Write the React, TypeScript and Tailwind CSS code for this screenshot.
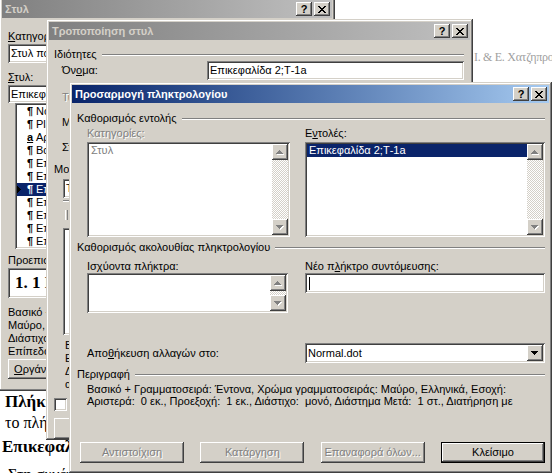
import React from 'react';
import clsx from 'clsx';

const face = 'bg-[#d4d0c8]';
const frameBevel =
  'shadow-[inset_-1px_-1px_0_#404040,inset_1px_1px_0_#d4d0c8,inset_-2px_-2px_0_#808080,inset_2px_2px_0_#ffffff]';
const btnBevel =
  'shadow-[inset_-1px_-1px_0_#404040,inset_1px_1px_0_#ffffff,inset_-2px_-2px_0_#808080,inset_2px_2px_0_#d4d0c8]';
const sunken =
  'shadow-[inset_1px_1px_0_#808080,inset_-1px_-1px_0_#ffffff,inset_2px_2px_0_#404040,inset_-2px_-2px_0_#d4d0c8]';
const greyed = 'text-[#808080] [text-shadow:1px_1px_0_#ffffff]';

const CloseGlyph = () => {
  const rows = ['11000011', '01100110', '00111100', '00011000', '00111100', '01100110', '11000011'];
  return (
    <svg width="8" height="7" shapeRendering="crispEdges">
      {rows.flatMap((r, y) =>
        r.split('').map((c, x) =>
          c === '1' ? <rect key={`${x}-${y}`} x={x} y={y} width="1" height="1" fill="#000" /> : null
        )
      )}
    </svg>
  );
};

const Arrow = ({ dir, disabled }: { dir: 'up' | 'down'; disabled?: boolean }) => {
  const rows = dir === 'up' ? [[3, 1], [2, 3], [1, 5], [0, 7]] : [[0, 7], [1, 5], [2, 3], [3, 1]];
  const draw = (d: number, fill: string) =>
    rows.map(([x, w], i) => <rect key={`${d}-${i}`} x={x + d} y={i + d} width={w} height="1" fill={fill} />);
  return (
    <svg width="8" height="5" shapeRendering="crispEdges">
      {disabled && draw(1, '#ffffff')}
      {draw(0, disabled ? '#808080' : '#000000')}
    </svg>
  );
};

const ArrowButton = ({ dir, disabled }: { dir: 'up' | 'down'; disabled?: boolean }) => (
  <div className={clsx('flex h-[16px] w-[16px] shrink-0 items-center justify-center', face, btnBevel)}>
    <Arrow dir={dir} disabled={disabled} />
  </div>
);

const ScrollBar = () => (
  <div className="flex w-[16px] flex-col">
    <ArrowButton dir="up" disabled />
    <div className="flex-1 bg-[image:repeating-conic-gradient(#d4d0c8_0_25%,#ffffff_0_50%)] bg-[length:2px_2px]" />
    <ArrowButton dir="down" disabled />
  </div>
);

const TitleBar = ({ title, active }: { title: string; active?: boolean }) => (
  <div
    className={clsx(
      'flex h-[18px] shrink-0 items-center justify-between pl-[3px] pr-[2px] bg-linear-to-r',
      active ? 'from-[#0a246a] to-[#a6caf0] text-white' : 'from-[#808080] to-[#c0c0c0] text-[#d4d0c8]'
    )}
  >
    <span className="whitespace-nowrap text-[11px] font-bold leading-none">{title}</span>
    <div className="flex gap-[2px]">
      <div className={clsx('flex h-[14px] w-[16px] items-center justify-center text-[11px] font-bold leading-none text-black', face, btnBevel)}>
        ?
      </div>
      <div className={clsx('flex h-[14px] w-[16px] items-center justify-center', face, btnBevel)}>
        <CloseGlyph />
      </div>
    </div>
  </div>
);

const GroupHeading = ({ children, className }: { children: React.ReactNode; className?: string }) => (
  <div className={clsx('flex h-[13px] items-center', className)}>
    <span className="whitespace-nowrap leading-[13px]">{children}</span>
    <div className="ml-[5px] h-[2px] flex-1 border-b border-t border-b-white border-t-[#808080]" />
  </div>
);

const ListBox = ({ className, children }: { className?: string; children?: React.ReactNode }) => (
  <div className={clsx('flex bg-white p-[2px]', sunken, className)}>
    <div className="flex-1 overflow-hidden">{children}</div>
    <ScrollBar />
  </div>
);

const PushButton = ({ children, disabled, isDefault }: { children: React.ReactNode; disabled?: boolean; isDefault?: boolean }) =>
  isDefault ? (
    <div className="h-[21px] w-[104px] border border-black">
      <div className={clsx('flex h-full w-full items-center justify-center', face, btnBevel)}>{children}</div>
    </div>
  ) : (
    <div className={clsx('flex h-[21px] w-[104px] items-center justify-center', face, btnBevel, disabled && greyed)}>
      {children}
    </div>
  );

const styleItems = [
  { mark: '¶', name: 'Normal' },
  { mark: '¶', name: 'Plain Text' },
  { mark: 'a', name: 'Αριθμός σελίδας' },
  { mark: '¶', name: 'Βασικό' },
  { mark: '¶', name: 'Επικεφαλίδα 1' },
  { mark: '¶', name: 'Επικεφαλίδα 1;Τ-1' },
  { mark: '¶', name: 'Επικεφαλίδα 2;Τ-1a' },
  { mark: '¶', name: 'Επικεφαλίδα 3' },
  { mark: '¶', name: 'Επικεφαλίδα 4' },
  { mark: '¶', name: 'Επικεφαλίδα 5' },
  { mark: '¶', name: 'Επικεφαλίδα 6' },
];

const StyleWindow = () => (
  <div className={clsx('absolute left-[-1px] top-[-3px] flex h-[394px] w-[336px] flex-col p-[3px]', face, frameBevel)}>
    <TitleBar title="Στυλ" />
    <div className="flex flex-col pl-[6px]">
      <div className="mt-[12px] h-[13px] leading-[13px]">
        <u>Κ</u>ατηγορίες:
      </div>
      <div className={clsx('mt-[1px] flex h-[19px] w-[150px] items-center bg-white pl-[3px]', sunken)}>
        Στυλ που χρησιμοποιούνται
      </div>
      <div className="mt-[8px] h-[13px] leading-[13px]">
        <u>Σ</u>τυλ:
      </div>
      <div className={clsx('mt-[1px] flex h-[18px] w-[150px] items-center bg-white pl-[3px]', sunken)}>
        Επικεφαλίδα 2;Τ-1a
      </div>
      <div className={clsx('ml-[7px] h-[146px] w-[140px] bg-white p-[2px]', sunken)}>
        {styleItems.map((it, i) => (
          <div key={it.name} className={clsx('flex h-[13px] items-center whitespace-nowrap', i === 6 && 'bg-[#0a246a] text-white')}>
            <span className="flex w-[10px] items-center">
              {i === 6 && (
                <svg width="4" height="7" shapeRendering="crispEdges">
                  <path d="M0 0h1v7H0zM1 1h1v5H1zM2 2h1v3H2zM3 3h1v1H3z" fill="#000" />
                </svg>
              )}
            </span>
            <span className={clsx('w-[9px] font-bold', it.mark === 'a' && 'underline')}>{it.mark}</span>
            <span>{it.name}</span>
          </div>
        ))}
      </div>
      <div className="mt-[5px] h-[13px] leading-[13px]">Προεπισκόπηση παραγράφου</div>
      <div className={clsx('mt-[1px] flex h-[30px] w-[150px] items-center bg-white pl-[7px]', sunken)}>
        <span className="font-['Liberation_Serif',serif] text-[17px] font-bold">1. 1 Επικεφαλίδα</span>
      </div>
      <div className="mt-[8px] whitespace-nowrap leading-[13px]">
        <div>Βασικό + Γραμματοσειρά: Έντονα, Χρώμα</div>
        <div>Μαύρο, Ελληνικά, Εσοχή: Αριστερά: 0 εκ.,</div>
        <div>Διάστιχο: μονό, Διάστημα Μετά: 1 στ.,</div>
        <div>Επίπεδο 2, Αρίθμηση 1.1</div>
      </div>
      <div className={clsx('mt-[1px] flex h-[20px] w-[75px] items-center justify-center', face, btnBevel)}>
        <span>
          <u>Ο</u>ργάνωση...
        </span>
      </div>
    </div>
  </div>
);

const ModifyWindow = () => (
  <div className={clsx('absolute left-[46px] top-[19px] flex h-[421px] w-[427px] flex-col p-[3px]', face, frameBevel)}>
    <TitleBar title="Τροποποίηση στυλ" />
    <div className="flex flex-col pl-[5px] pr-[6px]">
      <GroupHeading className="mt-[8px]">Ιδιότητες</GroupHeading>
      <div className="flex h-[19px] items-center pl-[8px]">
        <span className="w-[145px]">
          Όν<u>ο</u>μα:
        </span>
        <div className={clsx('flex h-[19px] flex-1 items-center bg-white pl-[3px]', sunken)}>Επικεφαλίδα 2;Τ-1a</div>
      </div>
      {['Τύπος στυλ:', 'Με βάση το:', 'Στυλ επόμενης παραγράφου:'].map((label, i) => (
        <div key={label} className={clsx('flex h-[19px] items-center pl-[8px]', i === 0 ? 'mt-[8px]' : 'mt-[6px]')}>
          <span className={clsx('w-[145px]', i === 0 && greyed)}>{label}</span>
          <div className={clsx('h-[19px] flex-1 bg-white', sunken)} />
        </div>
      ))}
      <div className="mt-[6px] h-[13px] leading-[13px]">Μορφοποίηση</div>
      <div className={clsx('ml-[9px] mt-[3px] flex h-[19px] w-[150px] items-center bg-white pl-[3px]', sunken)}>
        Times New Roman
      </div>
      <div className="ml-[9px] mt-[2px] h-[2px] border-b border-t border-b-white border-t-[#808080]" />
      <div className="ml-[11px] mt-[5px] flex h-[16px] items-center">
        <div className="h-[10px] w-[3px] border-l border-r border-l-white border-r-[#808080]" />
      </div>
      <div className={clsx('ml-[9px] mt-[5px] h-[107px] bg-white', sunken)} />
      <div className="ml-[11px] mt-[4px] whitespace-nowrap leading-[13px]">
        <div>Βασικό + Γραμματοσειρά: Έντονα, Χρώμα γραμματοσειράς: Μαύρο,</div>
        <div>Ελληνικά, Εσοχή: Αριστερά: 0 εκ., Προεξοχή: 1 εκ.,</div>
        <div>Διάστιχο: μονό, Διάστημα Μετά: 1 στ., Διατήρηση με το επόμενο,</div>
        <div>αριθμημένο + Επίπεδο: 2</div>
      </div>
      <div className="mt-[5px] flex items-center">
        <div className={clsx('h-[13px] w-[13px] bg-white', sunken)} />
        <span className="ml-[5px]">Προσθήκη στο πρότυπο</span>
      </div>
      <div className={clsx('mt-[5px] flex h-[21px] w-[75px] items-center justify-center', face, btnBevel)}>Μορφή</div>
    </div>
  </div>
);

const KeyboardWindow = () => (
  <div className={clsx('absolute left-[69px] top-[82px] flex h-[391px] w-[483px] flex-col p-[3px]', face, frameBevel)}>
    <TitleBar title="Προσαρμογή πληκτρολογίου" active />
    <div className="flex flex-col pl-[5px] pr-[4px]">
      <GroupHeading className="mt-[9px]">Καθορισμός εντολής</GroupHeading>
      <div className="ml-[10px] mt-[2px] flex gap-[15px]">
        <div className="flex w-[203px] flex-col">
          <span className={clsx('h-[13px] leading-[13px]', greyed)}>Κατηγορίες:</span>
          <ListBox className="mt-[2px] h-[95px]">
            <div className="flex h-[13px] items-center pl-[2px] text-[#808080]">Στυλ</div>
          </ListBox>
        </div>
        <div className="flex w-[240px] flex-col">
          <span className="h-[13px] leading-[13px]">
            Ε<u>ν</u>τολές:
          </span>
          <ListBox className="mt-[2px] h-[95px]">
            <div className="flex h-[13px] items-center bg-[#0a246a] pl-[2px] text-white">Επικεφαλίδα 2;Τ-1a</div>
          </ListBox>
        </div>
      </div>

      <GroupHeading className="mt-[4px]">Καθορισμός ακολουθίας πληκτρολογίου</GroupHeading>
      <div className="ml-[10px] mt-[6px] flex gap-[15px]">
        <div className="flex w-[203px] flex-col">
          <span className="h-[13px] leading-[13px]">
            Ισ<u>χ</u>ύοντα πλήκτρα:
          </span>
          <ListBox className="h-[40px] w-[201px]" />
        </div>
        <div className="flex w-[240px] flex-col">
          <span className="h-[13px] leading-[13px]">
            Νέο π<u>λ</u>ήκτρο συντόμευσης:
          </span>
          <div className={clsx('flex h-[20px] items-center bg-white pl-[4px]', sunken)}>
            <div className="h-[13px] w-px bg-black" />
          </div>
        </div>
      </div>

      <div className="ml-[10px] mt-[30px] flex h-[20px] items-center gap-[15px]">
        <span className="w-[203px]">
          Απο<u>θ</u>ήκευση αλλαγών στο:
        </span>
        <div className={clsx('flex h-[20px] w-[240px] items-center bg-white p-[2px]', sunken)}>
          <span className="flex-1 pl-[1px]">Normal.dot</span>
          <ArrowButton dir="down" />
        </div>
      </div>

      <GroupHeading className="mt-[5px]">Περιγραφή</GroupHeading>
      <div className="ml-[10px] mt-[2px] whitespace-pre leading-[12px]">
        <div>Βασικό + Γραμματοσειρά: Έντονα, Χρώμα γραμματοσειράς: Μαύρο, Ελληνικά, Εσοχή:</div>
        <div>Αριστερά:  0 εκ., Προεξοχή:  1 εκ., Διάστιχο:  μονό, Διάστημα Μετά:  1 στ., Διατήρηση με</div>
      </div>

      <div className="ml-[3px] mt-[35px] flex justify-between">
        <PushButton disabled>Αντιστοίχιση</PushButton>
        <PushButton disabled>Κατάργηση</PushButton>
        <PushButton disabled>Επαναφορά όλων...</PushButton>
        <PushButton isDefault>Κλείσιμο</PushButton>
      </div>
    </div>
  </div>
);

export default function App() {
  return (
    <div className="relative h-[473px] w-[552px] overflow-hidden bg-white font-['Liberation_Sans',Arial,sans-serif] text-[11px] text-black">
      {/* document behind the dialogs */}
      <div className="flex h-full flex-col font-['Liberation_Serif',serif]">
        <div className="pl-[474px] pt-[49px] text-[12px] leading-[16px] tracking-[-0.3px] whitespace-nowrap text-[#a0a0a0]">
          Ι. &amp; Ε. Χατζηπροκοπίου
        </div>
        <div className="mt-[327px] pl-[5px] text-[17px] font-bold leading-[20px] whitespace-nowrap">Πλήκτρα συντόμευσης για στυλ</div>
        <div className="mt-px pl-[5px] text-[16px] leading-[20px] whitespace-nowrap">το πλήκτρο συντόμευσης</div>
        <div className="mt-[4px] pl-[2px] text-[17px] font-bold leading-[20px] whitespace-nowrap">Επικεφαλίδα 2</div>
        <div className="mt-[8px] pl-[8px] text-[16px] leading-[20px] whitespace-nowrap">Στη συνέχεια</div>
      </div>

      <StyleWindow />
      <ModifyWindow />
      <KeyboardWindow />
    </div>
  );
}
